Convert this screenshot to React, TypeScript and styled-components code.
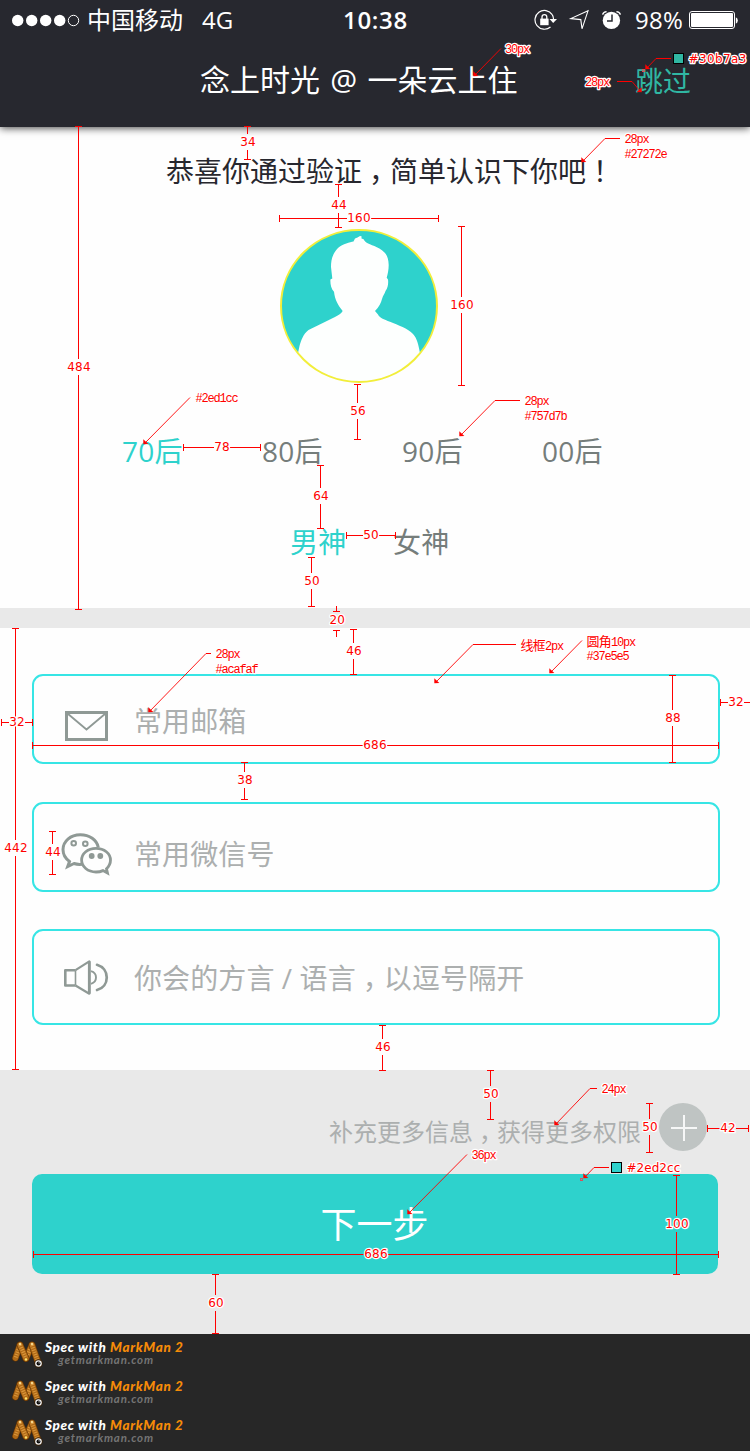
import React from "react";
import styled, { createGlobalStyle } from "styled-components";

const teal = "#2ed2cc";
const ink = "#27272e";
const muted = "#757d7b";
const hint = "#acafaf";
const iconGrey = "#8f9995";
const red = "#ff0000";

const GlobalStyle = createGlobalStyle`
  *, *::before, *::after { box-sizing: border-box; }
  body {
    margin: 0;
    background: #ffffff;
    font-family: "Open Sans", "Noto Sans CJK SC", sans-serif;
  }
`;

const Page = styled.div`
  position: relative;
  width: 750px;
  height: 1451px;
  overflow: hidden;
  display: flex;
  flex-direction: column;
  background: #fefefe;
`;

/* ---------- header ---------- */

const Header = styled.header`
  flex: none;
  height: 127px;
  background: #27282f;
  color: #ffffff;
  box-shadow: 0 1px 8px rgba(0, 0, 0, 0.75);
`;

const StatusBar = styled.div`
  display: grid;
  grid-template-columns: 343px 191px 1fr;
  height: 40px;
  font-size: 24px;
  line-height: 40px;
  white-space: nowrap;
`;

const StatusGroup = styled.div<{ $start?: number }>`
  display: flex;
  align-items: center;
  padding-left: ${(p) => p.$start ?? 0}px;
`;

const Carrier = styled.span`
  width: 115px;
  margin-left: 7px;
`;

const Clock = styled.span`
  font-weight: 600;
  letter-spacing: 0.7px;
`;

const Percent = styled.span`
  width: 54px;
  letter-spacing: 0.3px;
`;

const NavBar = styled.div`
  display: grid;
  grid-template-columns: 200px 435px 1fr;
  height: 81px;
  line-height: 80px;
  white-space: nowrap;
`;

const NavTitle = styled.h1`
  grid-column: 2;
  margin: 0;
  font-size: 30px;
  font-weight: 400;
  word-spacing: 2.5px;
`;

const SkipLink = styled.a`
  font-size: 28px;
  line-height: 82px;
  color: #30b7a3;
`;

/* ---------- profile ---------- */

const Profile = styled.section`
  flex: none;
  height: 481px;
  display: flex;
  flex-direction: column;
`;

const Welcome = styled.p`
  margin: 24px 0 0 166px;
  font-size: 28px;
  line-height: 40px;
  color: ${ink};
  white-space: nowrap;
`;

/* full-width punctuation centred in its em box */
const MidMark = styled.span`
  display: inline-block;
  width: 1em;
  padding-left: 0.25em;
  font-feature-settings: "halt";
`;

const AvatarPicture = styled.svg`
  display: block;
  flex: none;
  margin: 38px 0 0 280px;
`;

const Choices = styled.div<{ $start: number; $pitch: number; $top: number }>`
  display: grid;
  grid-auto-flow: column;
  grid-auto-columns: ${(p) => p.$pitch}px;
  padding-left: ${(p) => p.$start}px;
  margin-top: ${(p) => p.$top}px;
`;

const Choice = styled.span<{ $active?: boolean }>`
  font-size: 28px;
  line-height: 40px;
  letter-spacing: 0.2px;
  color: ${(p) => (p.$active ? teal : muted)};
`;

/* ---------- form ---------- */

const Divider = styled.div`
  flex: none;
  height: 20px;
  background: #e9e9e9;
`;

const Form = styled.section`
  flex: none;
  height: 442px;
  padding: 46px 30px 0 32px;
  display: flex;
  flex-direction: column;
`;

const Field = styled.div<{ $height: number; $gap?: number }>`
  flex: none;
  display: flex;
  align-items: flex-start;
  height: ${(p) => p.$height}px;
  margin-top: ${(p) => p.$gap ?? 0}px;
  padding-left: 26px;
  border: 2px solid #37e5e5;
  border-radius: 11px;
`;

const FieldIcon = styled.svg<{ $top: number }>`
  flex: none;
  width: 54px;
  height: 50px;
  margin: ${(p) => p.$top}px 20px 0 0;
`;

const Placeholder = styled.span<{ $top: number }>`
  margin-top: ${(p) => p.$top}px;
  font-size: 28px;
  line-height: 40px;
  letter-spacing: 0.1px;
  color: ${hint};
  white-space: nowrap;
`;

/* ---------- actions ---------- */

const Actions = styled.section`
  flex: none;
  height: 264px;
  padding: 33px 32px 0;
  background: #e9e9e9;
`;

const MoreRow = styled.div`
  display: flex;
  justify-content: flex-end;
  align-items: center;
  height: 48px;
  padding-right: 11px;
`;

const MoreText = styled.span`
  margin: 9px 18px 0 0;
  font-size: 24px;
  line-height: 40px;
  color: ${hint};
`;

const NextButton = styled.button`
  display: block;
  width: 686px;
  height: 100px;
  margin-top: 23px;
  padding: 2px 1px 0 0;
  border: 0;
  border-radius: 10px;
  background: ${teal};
  color: #ffffff;
  font: inherit;
  font-size: 36px;
  line-height: 98px;
`;

/* ---------- footer ---------- */

const Footer = styled.footer`
  flex: none;
  height: 117px;
  background: #272727;
`;

const Credit = styled.div`
  display: flex;
  height: 39px;
  padding: 4px 0 0 11px;
  font-family: Lato, "Open Sans", sans-serif;
  font-style: italic;
  white-space: nowrap;
`;

const CreditText = styled.div`
  display: flex;
  flex-direction: column;
  margin-left: 1px;
`;

const CreditTitle = styled.span`
  font-size: 13.5px;
  line-height: 19px;
  font-weight: 900;
  letter-spacing: 0.66px;
  color: #ffffff;
`;

const Brand = styled.span`
  color: #f68b08;
`;

const CreditLink = styled.span`
  margin: -5px 0 0 13px;
  font-size: 11.5px;
  line-height: 16px;
  font-weight: 700;
  letter-spacing: 0.8px;
  color: #747474;
`;

/* ---------- spec overlay ---------- */

const SpecLayer = styled.svg`
  position: absolute;
  left: 0;
  top: 0;
  pointer-events: none;
`;

const Rule = styled.path`
  fill: none;
  stroke: ${red};
  stroke-width: 1px;
  shape-rendering: crispEdges;
`;

const Leader = styled.path`
  fill: none;
  stroke: ${red};
  stroke-width: 0.9px;
`;

const Size = styled.text`
  font-family: "DejaVu Sans", sans-serif;
  font-size: 12px;
  letter-spacing: 0.2px;
  fill: ${red};
  stroke: #ffffff;
  stroke-width: 2.5px;
  stroke-linejoin: round;
  paint-order: stroke;
`;

const Note = styled.text`
  font-family: "Liberation Mono", "Noto Sans CJK SC", monospace;
  font-size: 12px;
  letter-spacing: -1.2px;
  fill: ${red};
  stroke: #ffffff;
  stroke-width: 2.5px;
  stroke-linejoin: round;
  paint-order: stroke;
`;

const NoteHan = styled.tspan`
  font-size: 13px;
  letter-spacing: -0.8px;
`;

type Span = [at: number, from: number, to: number, mid: number, label: string];

const verticals: Span[] = [
  [78, 126, 609, 366.5, "484"],
  [247, 126, 159, 141.5, "34"],
  [338, 184, 227, 204.5, "44"],
  [461, 226, 385, 304.5, "160"],
  [357, 384, 439, 410.5, "56"],
  [320, 465, 528, 495.5, "64"],
  [311, 557, 606, 580.5, "50"],
  [353, 629, 674, 650.5, "46"],
  [15, 628, 1069, 847.5, "442"],
  [244, 762, 799, 779.5, "38"],
  [52, 831, 874, 851.5, "44"],
  [672, 675, 762, 717.5, "88"],
  [382, 1025, 1070, 1046.5, "46"],
  [490, 1070, 1119, 1093.5, "50"],
  [649, 1103, 1152, 1126.5, "50"],
  [676, 1175, 1274, 1223.5, "100"],
  [215, 1274, 1333, 1302.5, "60"],
];

const horizontals: Span[] = [
  [218, 279, 438, 359, "160"],
  [447, 183, 260, 222, "78"],
  [535, 346, 395, 371, "50"],
  [722, 1, 32, 17, "32"],
  [745, 32, 718, 375, "686"],
  [702, 720, 752, 736, "32"],
  [1128, 707, 748, 728, "42"],
  [1254, 33, 718, 376, "686"],
];

const VerticalSize = ({ span: [x, y1, y2, mid, label] }: { span: Span }) => (
  <g>
    <Rule
      d={`M${x - 3} ${y1 + 0.5}h7M${x - 3} ${y2 + 0.5}h7M${x + 0.5} ${y1}V${mid - 7.5}M${x + 0.5} ${mid + 8.5}V${y2}`}
    />
    <Size x={x + 1} y={mid + 4.5} textAnchor="middle">{label}</Size>
  </g>
);

const HorizontalSize = ({ span: [y, x1, x2, mid, label] }: { span: Span }) => {
  const half = label.length * 3.8 + 0.5;
  return (
    <g>
      <Rule
        d={`M${x1 + 0.5} ${y - 3}v7M${x2 + 0.5} ${y - 3}v7M${x1} ${y + 0.5}H${mid - half}M${mid + half} ${y + 0.5}H${x2}`}
      />
      <Size x={mid} y={y + 4} textAnchor="middle">{label}</Size>
    </g>
  );
};

const Pointer = ({ from, bend, tip }: { from: [number, number]; bend?: [number, number]; tip: [number, number] }) => {
  const start = bend ?? from;
  const side = start[0] > tip[0] ? 1 : -1;
  return (
    <g>
      {bend && <Rule d={`M${from[0]} ${from[1] + 0.5}H${bend[0]}`} />}
      <Leader d={`M${start[0]} ${start[1] + 0.5}L${tip[0] + side} ${tip[1]}`} />
      <path d={`M${tip[0] + side * 0.3} ${tip[1] + 0.3}v-5l${side * 5} 4.8z`} fill={red} />
    </g>
  );
};

const Spec = () => (
  <SpecLayer width="750" height="1451" viewBox="0 0 750 1451">
    {verticals.map((s) => <VerticalSize key={`${s[0]}-${s[1]}`} span={s} />)}
    {horizontals.map((s) => <HorizontalSize key={`${s[0]}-${s[1]}`} span={s} />)}
    <Rule d="M333 611.5h7M336.5 606V611M333 630.5h7M336.5 630V637" />
    <Size x="337.3" y="624" textAnchor="middle">20</Size>

    <Pointer from={[501, 48]} tip={[473, 76]} />
    <Note x="505" y="53">30px</Note>
    <Pointer from={[671, 58]} bend={[656, 58]} tip={[645, 69]} />
    <rect x="642.5" y="69.5" width="2" height="2" fill="none" stroke="#d8505a" />
    <rect x="673.5" y="53.5" width="10" height="10" fill="#30b7a3" stroke="#000" />
    <Size x="688.5" y="63" textLength="58">#30b7a3</Size>
    <Pointer from={[617, 81]} bend={[632, 81]} tip={[642, 92]} />
    <Note x="585" y="86">28px</Note>
    <Pointer from={[620, 138]} bend={[605, 138]} tip={[581, 162]} />
    <Note x="624.5" y="143">28px</Note>
    <Note x="624.5" y="158">#27272e</Note>
    <Pointer from={[190, 397]} tip={[143, 444]} />
    <Note x="195.5" y="401.5">#2ed1cc</Note>
    <Pointer from={[520, 400]} bend={[495, 400]} tip={[459, 436]} />
    <Note x="524.5" y="405">28px</Note>
    <Note x="524.5" y="420">#757d7b</Note>
    <Pointer from={[516, 644]} bend={[473, 644]} tip={[434, 683]} />
    <Note x="520.5" y="649.5"><NoteHan>线框</NoteHan>2px</Note>
    <Pointer from={[582, 640]} tip={[549, 673]} />
    <Note x="586.5" y="645.5"><NoteHan>圆角</NoteHan>10px</Note>
    <Note x="586.5" y="660">#37e5e5</Note>
    <Pointer from={[211, 653]} bend={[206, 653]} tip={[148, 712]} />
    <Note x="215.5" y="658">28px</Note>
    <Note x="215.5" y="673">#acafaf</Note>
    <Pointer from={[597, 1088]} bend={[590, 1088]} tip={[554, 1125]} />
    <Note x="601.5" y="1093">24px</Note>
    <Pointer from={[467, 1154]} tip={[407, 1214]} />
    <Note x="471.5" y="1159">36px</Note>
    <Pointer from={[609, 1167]} bend={[594, 1167]} tip={[583, 1178]} />
    <rect x="580.5" y="1178.5" width="2" height="2" fill="none" stroke="#d8505a" />
    <rect x="611.5" y="1162.5" width="10" height="10" fill={teal} stroke="#000" />
    <Size x="626.5" y="1172" textLength="54">#2ed2cc</Size>
  </SpecLayer>
);

/* ---------- drawings ---------- */

const SignalDots = () => (
  <svg width="69" height="14" viewBox="0 0 69 14">
    {[0, 1, 2, 3].map((i) => <circle key={i} cx={6.7 + i * 14} cy="7.5" r="5.7" fill="#fff" />)}
    <circle cx="62.5" cy="7.5" r="5.2" fill="none" stroke="#fff" />
  </svg>
);

const StatusIcons = () => (
  <svg width="101" height="40" viewBox="534 0 101 40" fill="none" stroke="#fff">
    <path d="M552.2 14.6A9.4 9.4 0 1 0 550.500 27" strokeWidth="1.2" />
    <path d="M552.2 14.600Q553.500 16.500 553.500 19" strokeWidth="1.2" />
    <path d="M549.5 19h7.5l-3.8 4z" fill="#fff" stroke="none" />
    <rect x="540.2" y="18.6" width="8.4" height="6.6" fill="#fff" stroke="none" />
    <path d="M542 19v-2a2.4 2.4 0 0 1 4.8 0v2" strokeWidth="1.3" />
    <path d="M588 10.8L570.8 18.6 580.8 19.6 582 28.8z" strokeWidth="1.1" />
    <circle cx="611.4" cy="20.4" r="8.7" fill="#fff" stroke="none" />
    <path d="M612 14.5v6.6h-5" stroke="#27282f" strokeWidth="1.5" />
    <path d="M602.6 14.6q.8-2.8 4-3M620.4 14.6q-.8-2.8-4-3" strokeWidth="1.4" />
  </svg>
);

const Battery = () => (
  <svg width="50" height="20" viewBox="689 10 50 20">
    <rect x="689.5" y="11.5" width="45" height="17" rx="2.5" fill="none" stroke="#fff" />
    <rect x="691" y="13" width="42" height="14" rx="1" fill="#fff" />
    <path d="M735.8 17.3q2 .8 2 3.2t-2 3.2z" fill="#fff" />
  </svg>
);

const Avatar = () => (
  <AvatarPicture width="158" height="154" viewBox="280 229 158 154">
    <clipPath id="face"><ellipse cx="359" cy="306" rx="78" ry="76" /></clipPath>
    <ellipse cx="359" cy="306" rx="78" ry="76" fill={teal} />
    <path
      clipPath="url(#face)"
      fill="#fdfffe"
      d="M360 236L357.500 237.500 355 238.500 353.500 241.500C350 242 343 244 338 248 332 254 331 261 331 267L332.300 278.500 330.400 279.500C330.200 284 331 289 334 291.700 335 300 338 305 342.700 311 341 314 338 315.500 335 317L308.500 330C303 334 301 341 299.500 346L298 353V384H420V353C418.500 345 417 338 413 334 408 328.500 398 325 390 321.700 384 319.500 379 317.500 378 314.500L375 311C379 307 381 303 382 299 383 295 385 293.500 385.500 291 388 288 388.500 283 388 279.500L386.700 277.700C387.500 275 388.700 270 388.700 265 388.500 259 387 255 384.500 252.500 378 246 370 245 366.700 242.700 364 241 363.500 238.500 363 239L361.500 238.500 361.500 236.300z"
    />
    <ellipse cx="359" cy="306" rx="78" ry="76" fill="none" stroke="#f2ee3a" strokeWidth="2" />
  </AvatarPicture>
);

const MailIcon = () => (
  <FieldIcon $top={25} viewBox="60 701 54 50" fill="none" stroke={iconGrey}>
    <rect x="66.500" y="712.500" width="40" height="27" strokeWidth="3" />
    <path d="M67.500 713.500l19 16 19-16" strokeWidth="1.800" />
  </FieldIcon>
);

const ChatIcon = () => (
  <FieldIcon $top={25} viewBox="60 829 54 50" fill="none" stroke={iconGrey} strokeWidth="3">
    <path d="M98.300 847.500C97 840 89.500 834.800 80.300 834.800 70.500 834.800 63 841.300 63 849.600 63 854.600 65.500 858.700 69.500 861.500L67.700 866.500 74 863.500C76 864.200 79 864.600 82 864.300" />
    <path d="M96 848.300C87.800 848.300 81.600 853.500 81.600 860.100S87.800 872 96 872C98.500 872 101 871.500 103 870.600L107.500 873 106.500 868.700C109 866.500 110.500 863.500 110.500 860.100 110.500 853.500 104.200 848.300 96 848.300z" fill="#fefefe" strokeWidth="2.800" />
    <circle cx="73.700" cy="843.200" r="2.300" strokeWidth="2" />
    <circle cx="85.300" cy="843.700" r="2.300" strokeWidth="2" />
    <circle cx="91.700" cy="856" r="2.900" fill={iconGrey} stroke="none" />
    <circle cx="100.300" cy="856" r="2.900" fill={iconGrey} stroke="none" />
  </FieldIcon>
);

const SpeakerIcon = () => (
  <FieldIcon $top={21} viewBox="60 952 54 50" fill="none" stroke={iconGrey} strokeLinejoin="round">
    <path d="M75.500 970.200H65.300V985.500H75.500" strokeWidth="2.600" />
    <path d="M75.500 970.200V985.500" strokeWidth="1.600" />
    <path d="M75.500 970.200L89.300 961.300V993.700L75.500 985.500" strokeWidth="2.200" />
    <path d="M89.300 961.300V993.700" strokeWidth="2.800" />
    <path d="M91 971.200q5 1.500 5 6.300t-5 6.300" strokeWidth="1.900" />
    <path d="M97 964.800C110 968.500 110 986.500 97 990" strokeWidth="2.700" strokeLinecap="round" />
  </FieldIcon>
);

const PlusBadge = () => (
  <svg width="48" height="48" viewBox="0 0 48 48">
    <circle cx="24" cy="24" r="24" fill="#bfc4c3" />
    <path d="M12 25h26M25 12v26" stroke="#f6f7f7" strokeWidth="2" />
  </svg>
);

const legs = ["M9 7L4.500 20", "M21 7L15 20.500", "M9 7L15 20.500", "M21 7L27 24"];

const CaterpillarLogo = () => (
  <svg width="33" height="34" viewBox="0 0 33 34" fill="none" strokeLinecap="round">
    {legs.map((d) => (
      <g key={d}>
        <path d={d} stroke="#5e3205" strokeWidth="6.800" />
        <path d={d} stroke="#b06a17" strokeWidth="5.600" />
        <path d={d} stroke="#d9963c" strokeWidth="3.800" strokeLinecap="butt" strokeDasharray="1.200 1.200" />
      </g>
    ))}
    <circle cx="9" cy="6" r="1.300" fill="#f6d78c" />
    <circle cx="21" cy="6" r="1.300" fill="#f6d78c" />
    <circle cx="15" cy="21.500" r="1.200" fill="#ffe36a" />
    <circle cx="27.500" cy="25.500" r="4.200" fill="#3a2207" />
    <circle cx="27.500" cy="25.500" r="3.300" fill="#f2f2f2" />
    <circle cx="27.500" cy="25.500" r="2" fill="#0c0c0c" />
    <circle cx="28.100" cy="24.800" r="0.600" fill="#fff" />
  </svg>
);

export default function App() {
  return (
    <Page>
      <GlobalStyle />
      <Header>
        <StatusBar>
          <StatusGroup $start={11}>
            <SignalDots />
            <Carrier>中国移动</Carrier>
            <span>4G</span>
          </StatusGroup>
          <StatusGroup><Clock>10:38</Clock></StatusGroup>
          <StatusGroup>
            <StatusIcons />
            <Percent>98%</Percent>
            <Battery />
          </StatusGroup>
        </StatusBar>
        <NavBar>
          <NavTitle>念上时光 @ 一朵云上住</NavTitle>
          <SkipLink>跳过</SkipLink>
        </NavBar>
      </Header>

      <Profile>
        <Welcome>
          恭喜你通过验证<MidMark>，</MidMark>简单认识下你吧<MidMark>！</MidMark>
        </Welcome>
        <Avatar />
        <Choices $start={122} $pitch={140} $top={48}>
          <Choice $active>70后</Choice>
          <Choice>80后</Choice>
          <Choice>90后</Choice>
          <Choice>00后</Choice>
        </Choices>
        <Choices $start={290} $pitch={103} $top={51}>
          <Choice $active>男神</Choice>
          <Choice>女神</Choice>
        </Choices>
      </Profile>

      <Divider />

      <Form>
        <Field $height={90}>
          <MailIcon />
          <Placeholder $top={25}>常用邮箱</Placeholder>
        </Field>
        <Field $height={90} $gap={38}>
          <ChatIcon />
          <Placeholder $top={30}>常用微信号</Placeholder>
        </Field>
        <Field $height={96} $gap={37}>
          <SpeakerIcon />
          <Placeholder $top={27}>
            你会的方言 / 语言<MidMark>，</MidMark>以逗号隔开
          </Placeholder>
        </Field>
      </Form>

      <Actions>
        <MoreRow>
          <MoreText>补充更多信息<MidMark>，</MidMark>获得更多权限</MoreText>
          <PlusBadge />
        </MoreRow>
        <NextButton>下一步</NextButton>
      </Actions>

      <Footer>
        {[0, 1, 2].map((i) => (
          <Credit key={i}>
            <CaterpillarLogo />
            <CreditText>
              <CreditTitle>Spec with <Brand>MarkMan 2</Brand></CreditTitle>
              <CreditLink>getmarkman.com</CreditLink>
            </CreditText>
          </Credit>
        ))}
      </Footer>

      <Spec />
    </Page>
  );
}
